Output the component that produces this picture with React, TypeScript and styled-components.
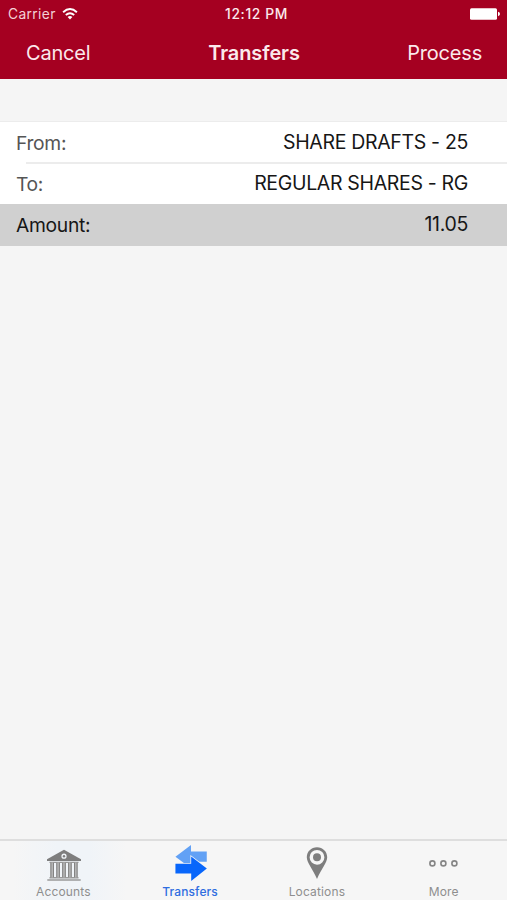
import React from "react";
import styled, { createGlobalStyle } from "styled-components";

const GlobalStyle = createGlobalStyle`
  * { box-sizing: border-box; }
  body { margin: 0; background: #f5f5f5; font-family: Inter, "Liberation Sans", sans-serif; }
`;

const Screen = styled.div`
  display: flex;
  flex-direction: column;
  width: 507px;
  height: 900px;
  overflow: hidden;
  background: #f5f5f5;
`;

const Header = styled.header`
  height: 79px;
  flex: none;
  background: #a50021;
  color: #fbe9ec;
`;

const StatusBar = styled.div`
  display: grid;
  grid-template-columns: 1fr auto 1fr;
  align-items: center;
  height: 27px;
  padding: 0 7px 0 8px;
  line-height: 16px;
`;

const Carrier = styled.div`
  display: flex;
  align-items: center;
  gap: 6px;
  font-size: 13.8px;
  letter-spacing: 0.35px;
  color: #f3d0d6;
`;

const Clock = styled.div`
  padding-left: 5px;
  font-weight: 500;
  font-size: 13.8px;
  letter-spacing: 0.65px;
`;

const Battery = styled.svg`
  justify-self: end;
`;

const NavBar = styled.nav`
  display: grid;
  grid-template-columns: 1fr auto 1fr;
  align-items: center;
  height: 52px;
  padding: 0 25px 0 26px;
`;

const NavButton = styled.button<{ $align: "start" | "end" }>`
  justify-self: ${(p) => p.$align};
  padding: 0;
  border: 0;
  background: none;
  color: inherit;
  font: 400 20px/26px Inter, sans-serif;
  letter-spacing: -0.2px;
`;

const Title = styled.h1`
  margin: 0;
  font-size: 20px;
  line-height: 26px;
  font-weight: 600;
  letter-spacing: -0.1px;
`;

const Form = styled.main`
  flex: 1;
  padding-top: 42px;
`;

const Row = styled.div<{ $selected?: boolean }>`
  display: flex;
  justify-content: space-between;
  height: ${(p) => (p.$selected ? 42 : 41)}px;
  padding: 0 39px 0 16px;
  background: ${(p) => (p.$selected ? "#d0d0d0" : "#fff")};
  color: ${(p) => (p.$selected ? "#161616" : "#555")};
  font-size: 19.3px;
  line-height: 42px;
`;

const TopDivider = styled.div`
  height: 1px;
  background: #ececec;
`;

const InsetDivider = styled.div`
  position: relative;
  height: 2px;
  margin: -1px 0 -1px 26px;
  background: #ececec;
`;

const Label = styled.span`
  letter-spacing: -0.32px;
`;

const Value = styled.span`
  color: #161616;
  font-size: 19.5px;
  letter-spacing: -0.33px;
  line-height: 40px;
`;

const TabBar = styled.footer`
  display: grid;
  grid-template-columns: repeat(4, 1fr);
  flex: none;
  height: 61px;
  border-top: 2px solid #dedede;
  background: #f6f6f6;
`;

const Tab = styled.div<{ $active?: boolean; $tint?: string }>`
  display: flex;
  flex-direction: column;
  align-items: center;
  padding-top: 4px;
  color: ${(p) => (p.$active ? "#2f6de0" : "#8e8e8e")};
  background: ${(p) => p.$tint ?? "transparent"};
  font-size: 12px;
  line-height: 14px;
  font-weight: ${(p) => (p.$active ? 500 : 400)};
  letter-spacing: ${(p) => (p.$active ? 0.1 : 0.15)}px;
`;

const TabIcon = styled.svg`
  flex: none;
  margin: 0 0 4px 1px;
`;

const WifiIcon = () => (
  <svg width="16" height="12" viewBox="0 0 16 12" fill="none" stroke="#fff" strokeWidth="1.9">
    <path d="M1.1 4.2Q8-2.1 14.9 4.2M3.8 7Q8 3.3 12.2 7" />
    <path d="M8 11.4 5.6 8.9Q8 7 10.4 8.9Z" fill="#fff" stroke="none" />
  </svg>
);

const BankIcon = () => (
  <TabIcon width="36" height="36" viewBox="0 0 36 36" fill="#7e7e7e">
    <path fillRule="evenodd" d="M18 4.8 35 14.2V16H1v-1.8ZM18 8.6a2.6 2.6 0 1 0 0 5.2 2.6 2.6 0 0 0 0-5.2Z" />
    <circle cx="18" cy="11.2" r="1.2" />
    <path d="M3.5 16.8h29v1.3h-29ZM3.5 32h29v1.5h-29ZM1.3 34.2h33.4v1.6H1.3Z" fill="#999" />
    <path d="M6.2 17.5v15M12.1 17.5v15M18 17.5v15M23.9 17.5v15M29.8 17.5v15" stroke="#b5b5b5" strokeWidth="3.6" />
    <path d="M4.9 17.5v15M7.5 17.5v15M10.8 17.5v15M13.4 17.5v15M16.7 17.5v15M19.3 17.5v15M22.6 17.5v15M25.2 17.5v15M28.5 17.5v15M31.1 17.5v15" stroke="#838383" strokeWidth="1" />
  </TabIcon>
);

const ArrowsIcon = () => (
  <TabIcon width="36" height="36" viewBox="0 0 36 37">
    <path d="M2 12.2 18 0v6.8h16.2v10.4H18V24Z" fill="#62a1f5" />
    <path d="M2 19.2h16.2v-7.4L34.3 24.2 18.2 37v-7.6H2Z" fill="#0866fb" stroke="#f6f6f6" strokeWidth="1.6" paintOrder="stroke" />
  </TabIcon>
);

const PinIcon = () => (
  <TabIcon width="36" height="36" viewBox="0 0 36 36" fill="#7e7e7e">
    <path fillRule="evenodd" d="M18 2.2c-5.8 0-10.2 4.4-10.2 10 0 5.3 5.8 11.5 10.2 21.8 4.4-10.3 10.2-16.5 10.2-21.8 0-5.6-4.4-10-10.2-10Zm0 2.7a7.4 7.4 0 1 1 0 14.8 7.4 7.4 0 0 1 0-14.8Z" />
    <circle cx="18" cy="12.2" r="4" />
  </TabIcon>
);

const MoreIcon = () => (
  <TabIcon width="36" height="36" viewBox="0 0 36 36" fill="none" stroke="#858585" strokeWidth="1.6">
    <circle cx="6.4" cy="18.4" r="2.5" />
    <circle cx="17.4" cy="18.4" r="2.5" />
    <circle cx="28.4" cy="18.4" r="2.5" />
  </TabIcon>
);

export default function App() {
  return (
    <Screen>
      <GlobalStyle />
      <Header>
        <StatusBar>
          <Carrier>
            Carrier
            <WifiIcon />
          </Carrier>
          <Clock>12:12 PM</Clock>
          <Battery width="30" height="12" viewBox="0 0 30 12" fill="#fff">
            <rect x="0" y="0.3" width="27" height="11.4" rx="1.5" />
            <path d="M28 3.8q2 .6 2 2.2t-2 2.2Z" />
          </Battery>
        </StatusBar>
        <NavBar>
          <NavButton $align="start">Cancel</NavButton>
          <Title>Transfers</Title>
          <NavButton $align="end">Process</NavButton>
        </NavBar>
      </Header>
      <Form>
        <TopDivider />
        <Row>
          <Label>From:</Label>
          <Value>SHARE DRAFTS - 25</Value>
        </Row>
        <InsetDivider />
        <Row>
          <Label>To:</Label>
          <Value>REGULAR SHARES - RG</Value>
        </Row>
        <Row $selected>
          <Label>Amount:</Label>
          <Value>11.05</Value>
        </Row>
      </Form>
      <TabBar>
        <Tab $tint="linear-gradient(90deg, #f6f6f6 10%, #f0f4f8 45%, #f0f4f8 70%, #f6f6f6 100%)">
          <BankIcon />
          Accounts
        </Tab>
        <Tab $active>
          <ArrowsIcon />
          Transfers
        </Tab>
        <Tab>
          <PinIcon />
          Locations
        </Tab>
        <Tab>
          <MoreIcon />
          More
        </Tab>
      </TabBar>
    </Screen>
  );
}
